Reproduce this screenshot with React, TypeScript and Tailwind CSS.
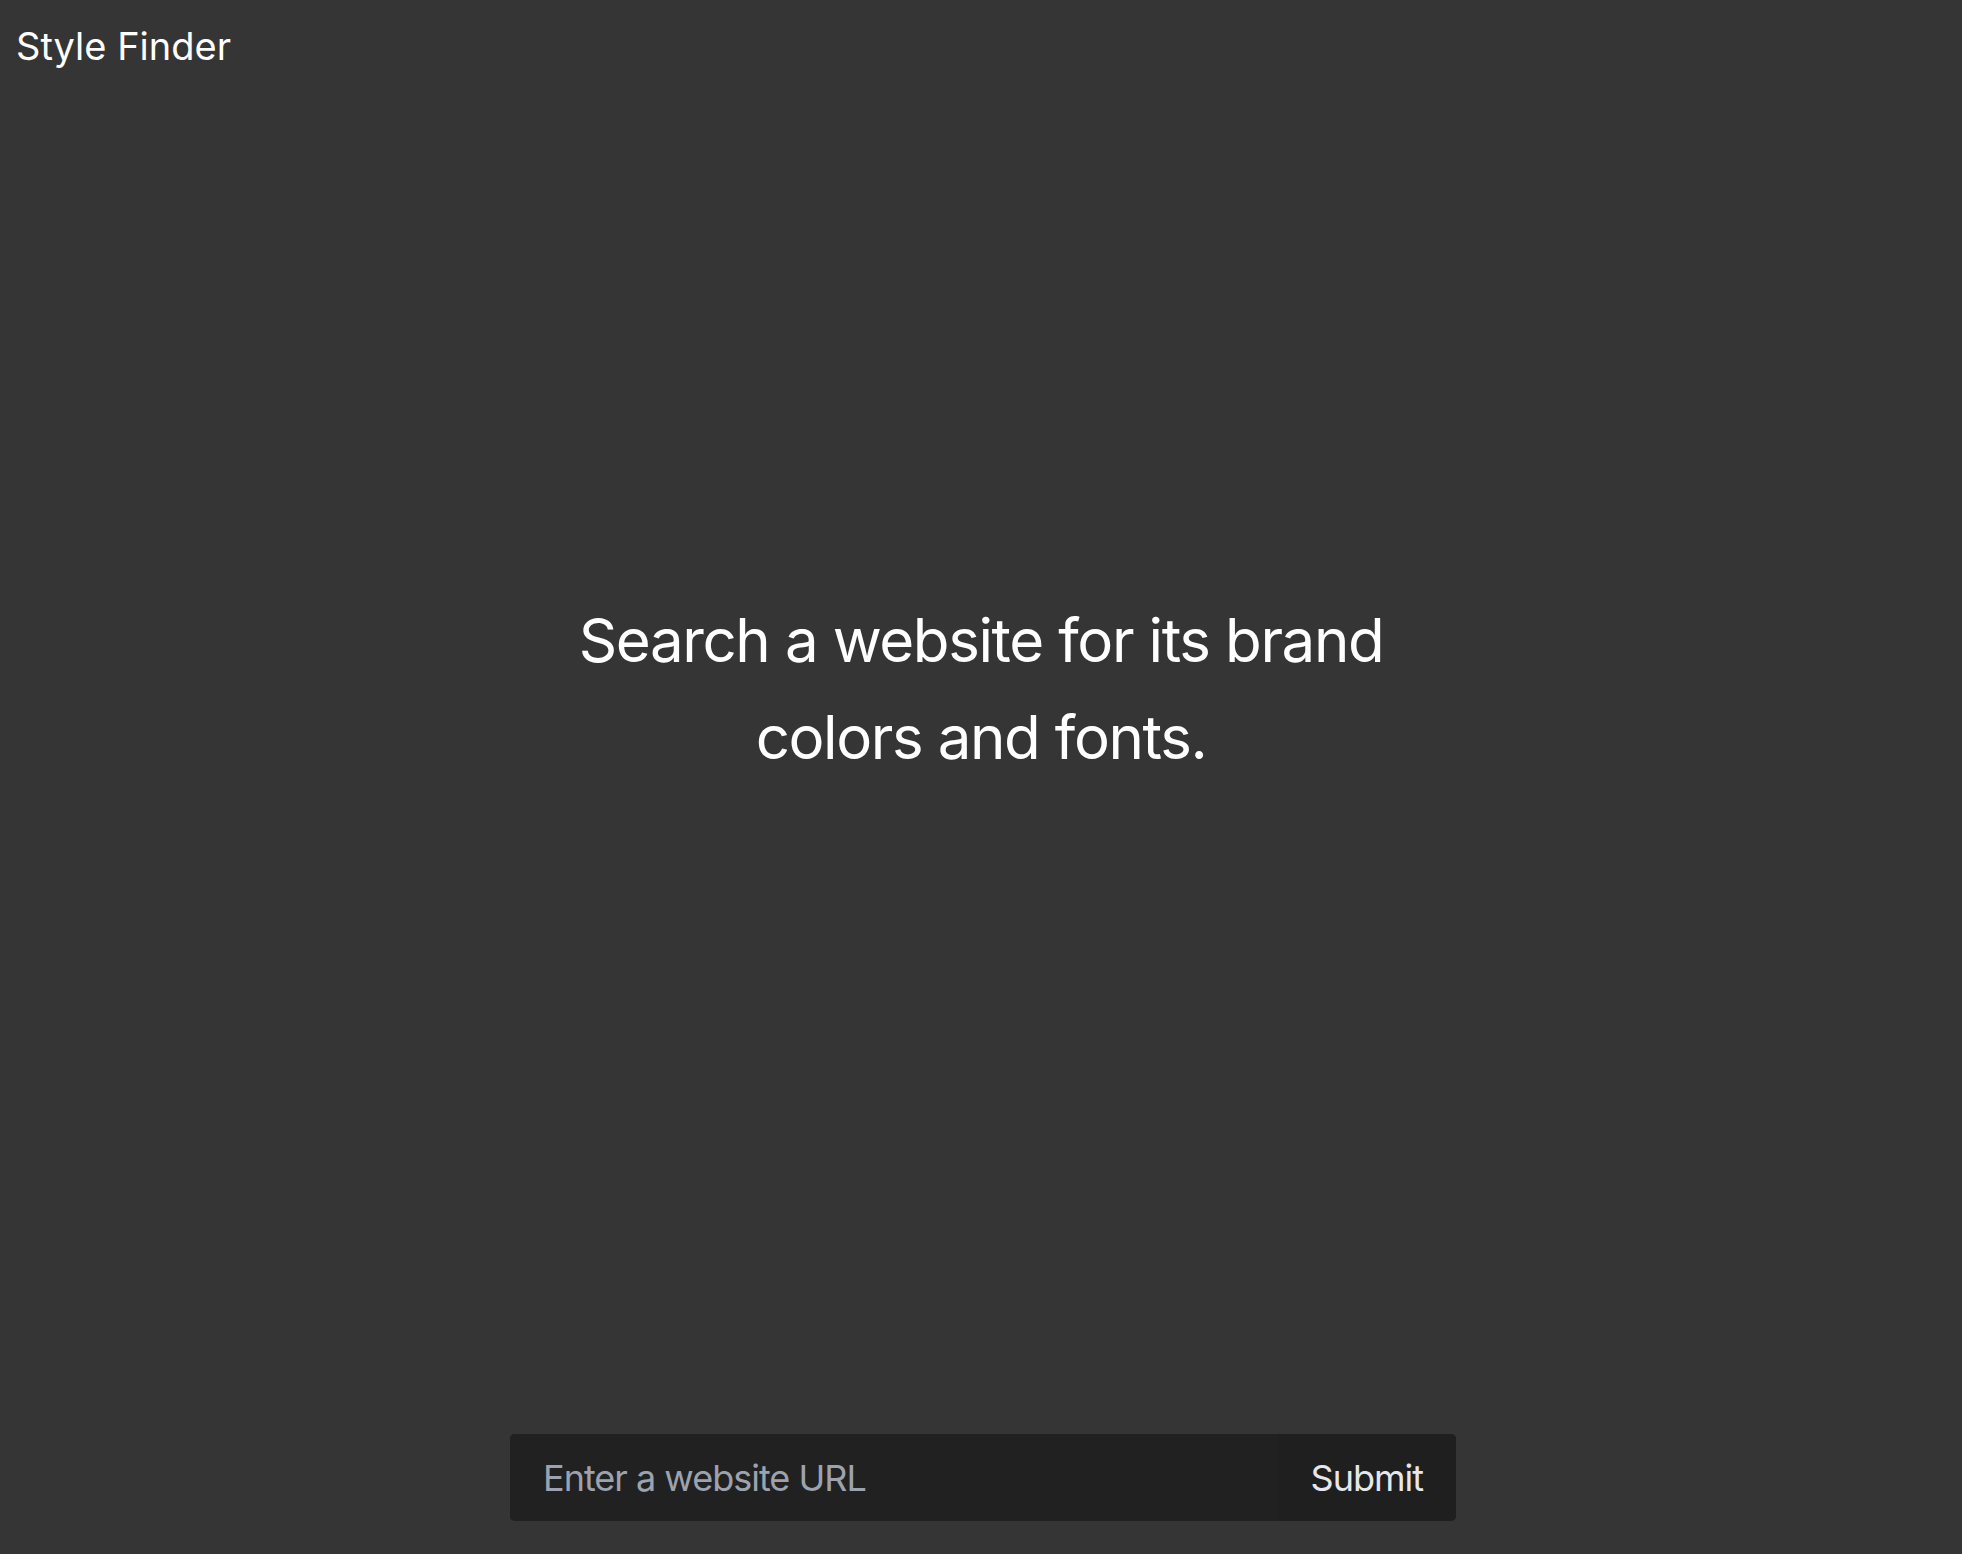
import React from "react";

export default function App() {
  return (
    <div
      className="min-h-screen w-full bg-[#353535] flex flex-col text-white"
      style={{ fontFamily: "Inter, 'Noto Sans', sans-serif" }}
    >
      <header className="px-[16px] pt-[19px]">
        <h1 className="text-[38px] leading-[54px] font-normal tracking-[0px]">Style Finder</h1>
      </header>
      <main className="flex-1 flex flex-col items-center">
        <h2 className="mt-[519px] max-w-[860px] text-center text-[60px] leading-[97px] font-normal tracking-[-1.4px]">
          Search a website for its brand colors and fonts.
        </h2>
      </main>
      <div className="flex justify-center pl-[4px] pb-[33px]">
        <form
          className="flex h-[87px] w-[946px] rounded-[5px] overflow-hidden bg-[#212121]"
          onSubmit={(e) => e.preventDefault()}
        >
          <input
            type="text"
            placeholder="Enter a website URL"
            className="min-w-0 flex-1 bg-[#212121] px-[33px] text-[36px] tracking-[-1px] text-white placeholder:text-[#9ca3af] outline-none"
          />
          <button
            type="submit"
            className="bg-[#1f1f1f] px-[33px] text-[36px] tracking-[-1px] text-[#e5e7eb]"
          >
            Submit
          </button>
        </form>
      </div>
    </div>
  );
}
